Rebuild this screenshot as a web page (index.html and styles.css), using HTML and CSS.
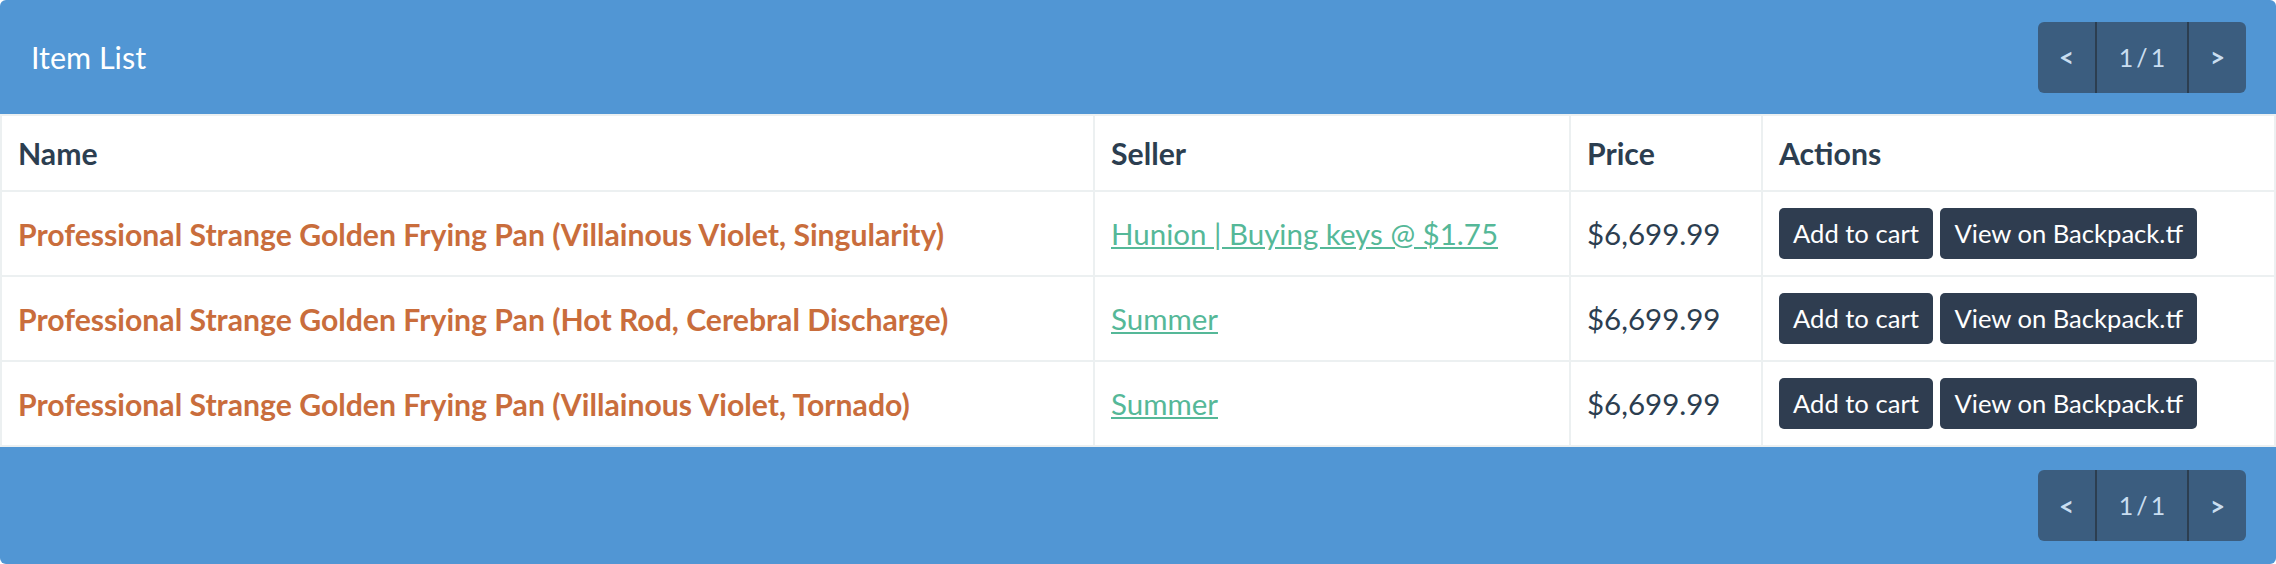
FILE: index.html
```html
<!DOCTYPE html>
<html lang="en">
<head>
<meta charset="utf-8">
<title>Item List</title>
<link rel="stylesheet" href="styles.css">
</head>
<body>
<div class="panel">
  <div class="panel-head">
    <span class="panel-title">Item List</span>
    <div class="pager">
      <button class="pager-btn pager-arrow">&lt;</button>
      <span class="pager-btn pager-page">1/1</span>
      <button class="pager-btn pager-arrow">&gt;</button>
    </div>
  </div>
  <table class="items">
    <colgroup>
      <col class="col-name">
      <col class="col-seller">
      <col class="col-price">
      <col class="col-actions">
    </colgroup>
    <thead>
      <tr><th>Name</th><th>Seller</th><th>Price</th><th>Actions</th></tr>
    </thead>
    <tbody>
      <tr>
        <td class="item-name">Professional Strange Golden Frying Pan (Villainous Violet, Singularity)</td>
        <td><a class="seller-link" href="#">Hunion | Buying keys @ $1.75</a></td>
        <td>$6,699.99</td>
        <td><button class="btn">Add to cart</button> <button class="btn">View on Backpack.tf</button></td>
      </tr>
      <tr>
        <td class="item-name">Professional Strange Golden Frying Pan (Hot Rod, Cerebral Discharge)</td>
        <td><a class="seller-link" href="#">Summer</a></td>
        <td>$6,699.99</td>
        <td><button class="btn">Add to cart</button> <button class="btn">View on Backpack.tf</button></td>
      </tr>
      <tr>
        <td class="item-name">Professional Strange Golden Frying Pan (Villainous Violet, Tornado)</td>
        <td><a class="seller-link" href="#">Summer</a></td>
        <td>$6,699.99</td>
        <td><button class="btn">Add to cart</button> <button class="btn">View on Backpack.tf</button></td>
      </tr>
    </tbody>
  </table>
  <div class="panel-foot">
    <div class="pager">
      <button class="pager-btn pager-arrow">&lt;</button>
      <span class="pager-btn pager-page">1/1</span>
      <button class="pager-btn pager-arrow">&gt;</button>
    </div>
  </div>
</div>
</body>
</html>
```
FILE: styles.css
```css
html, body {
  margin: 0;
  padding: 0;
  background: #ffffff;
}

body {
  font-family: Lato, "Noto Sans", "Liberation Sans", sans-serif;
  font-size: 29.5px;
  line-height: 42px;
  color: #2c3e50;
}

.panel {
  background: #5196d4;
  border-radius: 6px;
  overflow: hidden;
}

.panel-head {
  height: 114px;
  box-sizing: border-box;
  padding: 0 30px 0 31px;
  display: flex;
  align-items: center;
  justify-content: space-between;
}

.panel-title {
  color: #ffffff;
  font-size: 30.5px;
  font-weight: 400;
}

.panel-foot {
  height: 117px;
  box-sizing: border-box;
  padding: 0 30px;
  display: flex;
  align-items: center;
  justify-content: flex-end;
}

.pager {
  display: flex;
  height: 71px;
  background: #3b5d7f;
  border-radius: 6px;
  overflow: hidden;
}

.pager-btn {
  display: flex;
  align-items: center;
  justify-content: center;
  border: 0;
  margin: 0;
  padding: 0;
  background: transparent;
  color: #c9ddf0;
  font-family: inherit;
  font-size: 26px;
  font-weight: 700;
  line-height: 1;
}

.pager-arrow {
  width: 57px;
}

.pager-page {
  box-sizing: content-box;
  font-size: 25px;
  font-weight: 400;
  letter-spacing: 3px;
  padding-left: 3px;
  width: 87px;
  border-left: 2px solid #2c3e50;
  border-right: 2px solid #2c3e50;
}

.items {
  width: 100%;
  border-collapse: collapse;
  table-layout: fixed;
  background: #ffffff;
  border: 2px solid #ecf0f1;
}

.col-seller { width: 476px; }
.col-price { width: 192px; }
.col-actions { width: 513px; }

.items th,
.items td {
  border: 2px solid #ecf0f1;
  padding: 16px;
  text-align: left;
  vertical-align: middle;
  white-space: nowrap;
}

.items th {
  font-weight: 700;
  font-size: 30.2px;
}

.item-name {
  color: #c96d3c;
  font-weight: 700;
  font-size: 30.2px;
}

.seller-link {
  color: #55b898;
  text-decoration: underline;
}

.btn {
  display: inline-block;
  background: #2f3d50;
  color: #ffffff;
  border: 0;
  border-radius: 5px;
  font-family: inherit;
  font-size: 25.6px;
  line-height: 39px;
  padding: 6px 14px;
  margin: 0;
  vertical-align: middle;
}
```
